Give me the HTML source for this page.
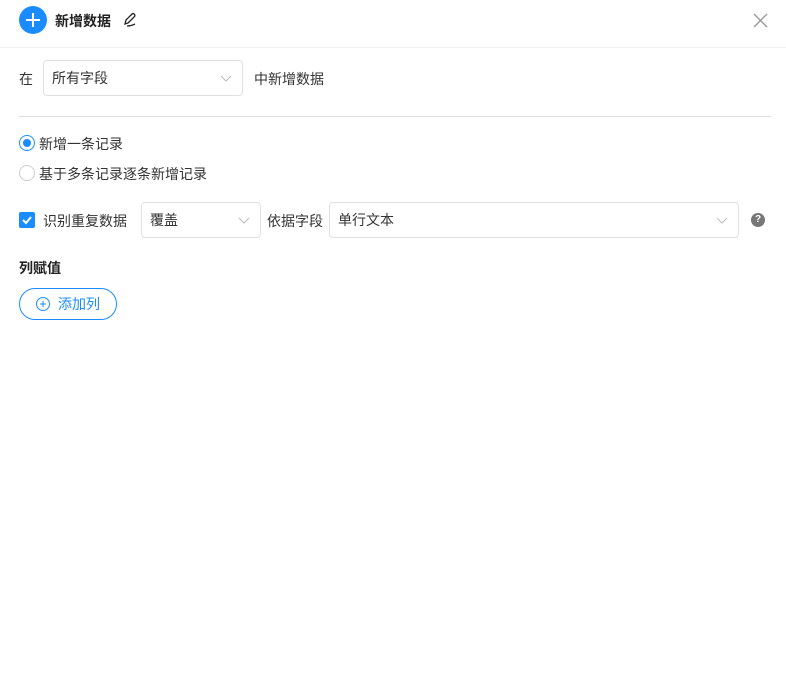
<!DOCTYPE html>
<html><head><meta charset="utf-8"><style>
*{box-sizing:border-box;margin:0;padding:0}
body{width:786px;height:683px;background:#fff;font-family:"Liberation Sans","Noto Sans CJK SC",sans-serif;font-size:14px;color:#333;position:relative;overflow:hidden}
.a{position:absolute}
.sel{position:absolute;border:1px solid #e0e0e0;border-radius:4px;height:36px;line-height:34px;padding-left:8px;color:#333}
.chev{position:absolute;right:10px;top:12px}
</style></head><body>
<div class="a" style="left:19px;top:6px;width:28px;height:28px;border-radius:50%;background:#1a8cff"></div>
<svg class="a" style="left:19px;top:6px" width="28" height="28"><path d="M14 7v14M7 14h14" stroke="#fff" stroke-width="2"/></svg>
<div class="a" style="left:55px;top:11px;font-weight:bold;font-size:14px;color:#222">新增数据</div>
<svg class="a" style="left:122px;top:11px" width="18" height="18"><path d="M3 13l1-4 6-6q1.5-1 2.5 0.5t-0.5 2.5l-6 6z M5 15q4 0 8-2" stroke="#222" stroke-width="1.3" fill="none"/></svg>
<svg class="a" style="left:753px;top:13px" width="15" height="15"><path d="M1 1l13 13M14 1L1 14" stroke="#999" stroke-width="1.4"/></svg>
<div class="a" style="left:0;top:47px;width:786px;height:1px;background:#f0f0f0"></div>
<div class="a" style="left:19px;top:69px">在</div>
<div class="sel" style="left:43px;top:60px;width:200px">所有字段<svg class="chev" width="12" height="10"><path d="M1 3l5 5 5-5" stroke="#bbb" fill="none"/></svg></div>
<div class="a" style="left:254px;top:69px">中新增数据</div>
<div class="a" style="left:19px;top:116px;width:752px;height:1px;background:#ddd"></div>
<div class="a" style="left:19px;top:135px;width:16px;height:16px;border-radius:50%;border:1px solid #1a8cff"></div>
<div class="a" style="left:23px;top:139px;width:8px;height:8px;border-radius:50%;background:#1a8cff"></div>
<div class="a" style="left:39px;top:134px">新增一条记录</div>
<div class="a" style="left:19px;top:165px;width:16px;height:16px;border-radius:50%;border:1px solid #ccc"></div>
<div class="a" style="left:39px;top:164px">基于多条记录逐条新增记录</div>
<div class="a" style="left:19px;top:212px;width:16px;height:16px;border-radius:2px;background:#1a8cff"></div>
<svg class="a" style="left:19px;top:212px" width="16" height="16"><path d="M4 8l3 3 5-6" stroke="#fff" stroke-width="2" fill="none"/></svg>
<div class="a" style="left:43px;top:211px">识别重复数据</div>
<div class="sel" style="left:141px;top:202px;width:120px">覆盖<svg class="chev" width="12" height="10"><path d="M1 3l5 5 5-5" stroke="#bbb" fill="none"/></svg></div>
<div class="a" style="left:267px;top:211px">依据字段</div>
<div class="sel" style="left:329px;top:202px;width:410px">单行文本<svg class="chev" width="12" height="10"><path d="M1 3l5 5 5-5" stroke="#bbb" fill="none"/></svg></div>
<div class="a" style="left:751px;top:213px;width:14px;height:14px;border-radius:50%;background:#777;color:#fff;font-size:10px;font-weight:bold;text-align:center;line-height:14px">?</div>
<div class="a" style="left:19px;top:258px;font-weight:bold;color:#222">列赋值</div>
<div class="a" style="left:19px;top:288px;width:98px;height:32px;border:1px solid #1a8cff;border-radius:16px;color:#1a8cff;line-height:30px;padding-left:38px">添加列</div>
<svg class="a" style="left:35px;top:296px" width="16" height="16"><circle cx="8" cy="8" r="6.5" stroke="#1a8cff" fill="none"/><path d="M8 5v6M5 8h6" stroke="#1a8cff"/></svg>
</body></html>
